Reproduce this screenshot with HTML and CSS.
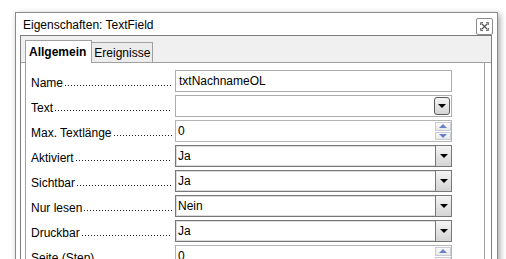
FILE: index.html
```html
<!DOCTYPE html>
<html lang="de">
<head>
    <meta charset="UTF-8">
    <title>Eigenschaften: TextField</title>
    <link rel="stylesheet" href="styles.css">
</head>
<body>
    <div class="window">
        <div class="titlebar">
            <span class="title">Eigenschaften: TextField</span>
            <button class="close">
                <svg width="9" height="9" viewBox="0 0 9 9">
                    <path d="M1.5 1.5 L7.5 7.5 M7.5 1.5 L1.5 7.5" stroke="#555" stroke-width="1.2" fill="none"/>
                    <path d="M0.5 3 V0.5 H3 M6 0.5 H8.5 V3 M8.5 6 V8.5 H6 M3 8.5 H0.5 V6" stroke="#777" stroke-width="1" fill="none"/>
                </svg>
            </button>
        </div>
        <div class="frame">
            <div class="tabs">
                <div class="tab active">Allgemein</div>
                <div class="tab">Ereignisse</div>
            </div>
            <div class="page">
                <div class="row">
                    <div class="label"><span>Name</span><i class="dots"></i></div>
                    <div class="field input">txtNachnameOL</div>
                </div>
                <div class="row">
                    <div class="label"><span>Text</span><i class="dots"></i></div>
                    <div class="field select light">
                        <span class="value"></span>
                        <span class="drop round"><i class="arrow"></i></span>
                    </div>
                </div>
                <div class="row">
                    <div class="label"><span>Max. Textlänge</span><i class="dots"></i></div>
                    <div class="field spin">
                        <span class="value">0</span>
                        <span class="spinbtns">
                            <span class="up"><i></i></span>
                            <span class="down"><i></i></span>
                        </span>
                    </div>
                </div>
                <div class="row">
                    <div class="label"><span>Aktiviert</span><i class="dots"></i></div>
                    <div class="field select">
                        <span class="value">Ja</span>
                        <span class="drop"><i class="arrow"></i></span>
                    </div>
                </div>
                <div class="row">
                    <div class="label"><span>Sichtbar</span><i class="dots"></i></div>
                    <div class="field select">
                        <span class="value">Ja</span>
                        <span class="drop"><i class="arrow"></i></span>
                    </div>
                </div>
                <div class="row">
                    <div class="label"><span>Nur lesen</span><i class="dots"></i></div>
                    <div class="field select">
                        <span class="value">Nein</span>
                        <span class="drop"><i class="arrow"></i></span>
                    </div>
                </div>
                <div class="row">
                    <div class="label"><span>Druckbar</span><i class="dots"></i></div>
                    <div class="field select">
                        <span class="value">Ja</span>
                        <span class="drop"><i class="arrow"></i></span>
                    </div>
                </div>
                <div class="row">
                    <div class="label"><span>Seite (Step)</span><i class="dots"></i></div>
                    <div class="field spin">
                        <span class="value">0</span>
                        <span class="spinbtns">
                            <span class="up"><i></i></span>
                            <span class="down"><i></i></span>
                        </span>
                    </div>
                </div>
            </div>
        </div>
    </div>
</body>
</html>
```

FILE: styles.css
```css
* {
    margin: 0;
    padding: 0;
    box-sizing: border-box;
}

html, body {
    height: 259px;
    overflow: hidden;
}

body {
    background: #fff;
    font-family: "Liberation Sans", Arial, sans-serif;
    font-size: 12px;
    color: #000;
}

.window {
    margin: 12px 0 0 15px;
    width: 483px;
    height: 260px;
    border: 1px solid #8a8a8a;
    background: #fff;
    box-shadow: 2px 2px 6px rgba(0, 0, 0, 0.35);
}

.titlebar {
    display: flex;
    align-items: center;
    justify-content: space-between;
    height: 22px;
    padding: 0 4px 0 7px;
}

.title {
    padding-top: 2px;
}

.close {
    display: flex;
    align-items: center;
    justify-content: center;
    width: 17px;
    height: 17px;
    margin-top: 5px;
    border: 1px solid #8c8c8c;
    border-radius: 2px;
    background: #fff;
}

.frame {
    margin: 0 5px 0 4px;
    height: 240px;
    border: 1px solid #7c7c7c;
    background: #fff;
}

.tabs {
    display: flex;
    align-items: flex-end;
    height: 27px;
    padding-left: 4px;
    background: #f0f0f0;
    border-bottom: 1px solid #a0a0a0;
}

.tab {
    height: 20px;
    padding: 3px 2px 0 2px;
    border: 1px solid #a0a0a0;
    border-bottom: none;
    background: #ececec;
}

.tab.active {
    height: 23px;
    margin-bottom: -1px;
    padding: 4px 5px 0 3px;
    background: #fff;
    font-weight: bold;
}

.tab + .tab {
    border-left: none;
}

.page {
    display: flex;
    flex-direction: column;
    gap: 3px;
    margin: 0 6px 0 4px;
    height: 220px;
    padding: 7px 32px 0 5px;
    border-left: 1px solid #a0a0a0;
    border-right: 1px solid #a0a0a0;
}

.row {
    display: flex;
    align-items: center;
    height: 22px;
    flex: none;
}

.label {
    display: flex;
    align-items: flex-end;
    width: 141px;
    margin-right: 3px;
    padding-top: 4px;
    white-space: nowrap;
    flex: none;
}

.dots {
    flex: 1;
    height: 3px;
    margin: 0 0 3px 1px;
    background-image: radial-gradient(circle, #222 0.7px, transparent 0.9px);
    background-size: 3px 3px;
    background-repeat: repeat-x;
}

.field {
    display: flex;
    align-items: center;
    flex: 1;
    height: 22px;
}

.input {
    padding-left: 3px;
    border: 1px solid #acacac;
}

.value {
    flex: 1;
    padding-left: 2px;
}

.select {
    border: 1px solid #777;
    box-shadow: inset 0 0 0 1px #dcdcdc;
}

.select.light {
    border-color: #acacac;
    box-shadow: none;
}

.drop {
    display: flex;
    align-items: center;
    justify-content: center;
    width: 16px;
    align-self: stretch;
    border-left: 1px solid #777;
    background: linear-gradient(#f4f4f4, #d4d4d4);
}

.drop.round {
    margin: 1px 1px 1px 0;
    border: 1px solid #5a5a5a;
    border-radius: 3px;
}

.arrow {
    width: 0;
    height: 0;
    border-left: 4px solid transparent;
    border-right: 4px solid transparent;
    border-top: 4px solid #000;
}

.spin {
    border: 1px solid #b4b4b4;
}

.spinbtns {
    display: flex;
    flex-direction: column;
    gap: 1px;
    width: 16px;
    align-self: stretch;
    padding: 1px 0;
}

.spinbtns span {
    display: flex;
    align-items: center;
    justify-content: center;
    flex: 1;
    border: 1px solid #c8ccd4;
    background: linear-gradient(#fafafa, #e8e8e8);
}

.spinbtns .up i {
    border-left: 4px solid transparent;
    border-right: 4px solid transparent;
    border-bottom: 4px solid #6a80c8;
}

.spinbtns .down i {
    border-left: 4px solid transparent;
    border-right: 4px solid transparent;
    border-top: 4px solid #6a80c8;
}
```
